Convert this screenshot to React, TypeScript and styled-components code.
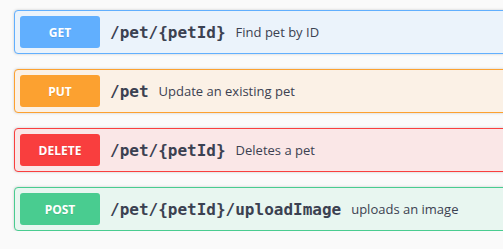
import React from 'react'
import styled, {createGlobalStyle} from 'styled-components'

type Method = 'get' | 'put' | 'delete' | 'post'

const colors: Record<Method, {main: string; bg: string}> = {
    get: {main: '#61affe', bg: '#ebf3fb'},
    put: {main: '#fca130', bg: '#fbf1e6'},
    delete: {main: '#f93e3e', bg: '#fae7e7'},
    post: {main: '#49cc90', bg: '#e8f6f0'},
}

const GlobalStyle = createGlobalStyle`
    html, body {
        margin: 0;
        padding: 0;
        background: #fafafa;
        overflow: hidden;
    }
`

const Wrapper = styled.div`
    width: 520px;
    padding: 10px 0 0 14px;
    display: flex;
    flex-direction: column;
    gap: 15px;
`

const OpBlock = styled.div<{method: Method}>`
    display: flex;
    align-items: center;
    padding: 5px;
    border: 1px solid ${({method}) => colors[method].main};
    border-radius: 4px;
    background: ${({method}) => colors[method].bg};
    box-shadow: 0 0 3px rgba(0, 0, 0, 0.19);
`

const MethodBadge = styled.span<{method: Method}>`
    min-width: 80px;
    box-sizing: border-box;
    height: 32px;
    display: flex;
    align-items: center;
    justify-content: center;
    border-radius: 3px;
    background: ${({method}) => colors[method].main};
    color: #fff;
    font-family: 'Open Sans', sans-serif;
    font-size: 12px;
    font-weight: 700;
    text-shadow: 0 1px 0 rgba(0, 0, 0, 0.1);
`

const Path = styled.span`
    padding: 0 10px;
    color: #3b4151;
    font-family: 'DejaVu Sans Mono', monospace;
    font-size: 16px;
    font-weight: 600;
`

const Description = styled.span`
    color: #3b4151;
    font-family: 'Open Sans', sans-serif;
    font-size: 13px;
`

const ops: {method: Method; path: string; description: string}[] = [
    {method: 'get', path: '/pet/{petId}', description: 'Find pet by ID'},
    {method: 'put', path: '/pet', description: 'Update an existing pet'},
    {method: 'delete', path: '/pet/{petId}', description: 'Deletes a pet'},
    {method: 'post', path: '/pet/{petId}/uploadImage', description: 'uploads an image'},
]

const App = () => {
    return (
        <Wrapper>
            <GlobalStyle />
            {ops.map((op) => (
                <OpBlock key={op.method} method={op.method}>
                    <MethodBadge method={op.method}>
                        {op.method.toUpperCase()}
                    </MethodBadge>
                    <Path>{op.path}</Path>
                    <Description>{op.description}</Description>
                </OpBlock>
            ))}
        </Wrapper>
    )
}

export default App
